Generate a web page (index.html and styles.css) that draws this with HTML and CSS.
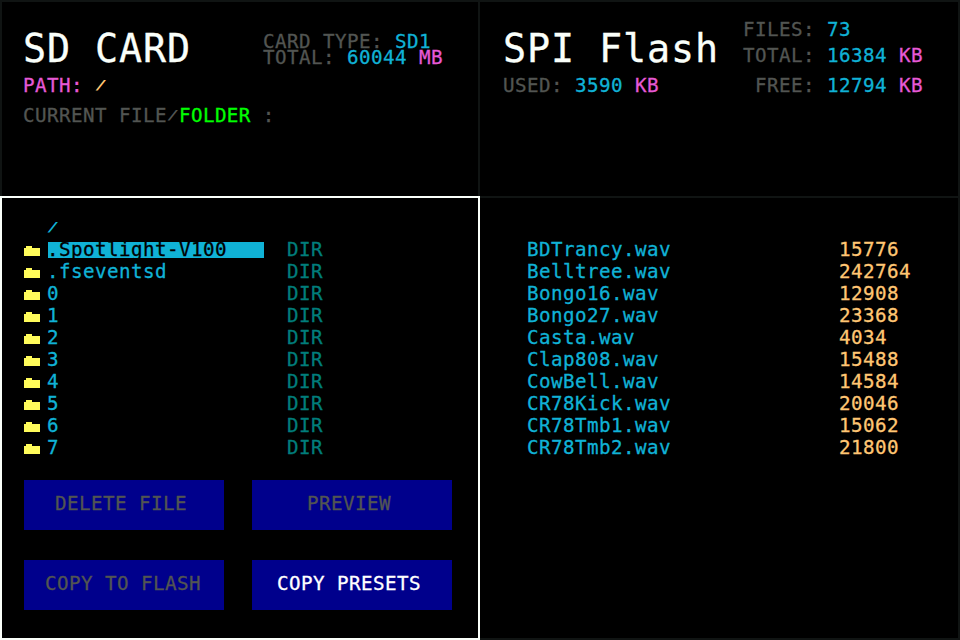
FILE: index.html
```
<!DOCTYPE html>
<html lang="en">
<head>
<meta charset="utf-8">
<title>SD Card / SPI Flash</title>
<link rel="stylesheet" href="styles.css">
</head>
<body>
<svg class="defs" width="0" height="0"><symbol id="folder" viewBox="0 0 16 10"><path d="M0 2h2V0h6v2h8v8H0z"/></symbol></svg>
<main class="screen">
  <section class="panel">
    <div class="top">
      <h1>SD CARD</h1>
      <div class="card-meta">
        <p>CARD TYPE: <b class="cyan">SD1</b></p>
        <p>TOTAL: <b class="cyan">60044</b> <b class="pink">MB</b></p>
      </div>
    </div>
    <p class="path"><b class="pink">PATH:</b> <b class="slash gold">/</b></p>
    <p class="current">CURRENT FILE<b class="slash">/</b><b class="green">FOLDER</b> :</p>
  </section>
  <section class="panel">
    <div class="top">
      <h1>SPI Flash</h1>
      <div class="flash-meta">
        <p>FILES: <b class="cyan">73</b></p>
        <p>TOTAL: <b class="cyan">16384</b> <b class="pink">KB</b></p>
      </div>
    </div>
    <div class="usage">
      <p>USED: <b class="cyan">3590</b> <b class="pink">KB</b></p>
      <p>FREE: <b class="cyan">12794</b> <b class="pink">KB</b></p>
    </div>
  </section>
  <section class="panel active">
    <p class="cwd"><b class="slash cyan">/</b></p>
    <ul class="list">
      <li class="selected"><svg><use href="#folder"/></svg><span class="name">.Spotlight-V100</span><span class="dir">DIR</span></li>
      <li><svg><use href="#folder"/></svg><span class="name">.fseventsd</span><span class="dir">DIR</span></li>
      <li><svg><use href="#folder"/></svg><span class="name">0</span><span class="dir">DIR</span></li>
      <li><svg><use href="#folder"/></svg><span class="name">1</span><span class="dir">DIR</span></li>
      <li><svg><use href="#folder"/></svg><span class="name">2</span><span class="dir">DIR</span></li>
      <li><svg><use href="#folder"/></svg><span class="name">3</span><span class="dir">DIR</span></li>
      <li><svg><use href="#folder"/></svg><span class="name">4</span><span class="dir">DIR</span></li>
      <li><svg><use href="#folder"/></svg><span class="name">5</span><span class="dir">DIR</span></li>
      <li><svg><use href="#folder"/></svg><span class="name">6</span><span class="dir">DIR</span></li>
      <li><svg><use href="#folder"/></svg><span class="name">7</span><span class="dir">DIR</span></li>
    </ul>
    <div class="actions">
      <button class="delete">DELETE FILE</button>
      <button class="preview">PREVIEW</button>
      <button class="copy">COPY TO FLASH</button>
      <button class="presets">COPY PRESETS</button>
    </div>
  </section>
  <section class="panel files">
    <ul class="list">
      <li><span class="name">BDTrancy.wav</span><span class="size">15776</span></li>
      <li><span class="name">Belltree.wav</span><span class="size">242764</span></li>
      <li><span class="name">Bongo16.wav</span><span class="size">12908</span></li>
      <li><span class="name">Bongo27.wav</span><span class="size">23368</span></li>
      <li><span class="name">Casta.wav</span><span class="size">4034</span></li>
      <li><span class="name">Clap808.wav</span><span class="size">15488</span></li>
      <li><span class="name">CowBell.wav</span><span class="size">14584</span></li>
      <li><span class="name">CR78Kick.wav</span><span class="size">20046</span></li>
      <li><span class="name">CR78Tmb1.wav</span><span class="size">15062</span></li>
      <li><span class="name">CR78Tmb2.wav</span><span class="size">21800</span></li>
    </ul>
  </section>
</main>
</body>
</html>
```
FILE: styles.css
```
* { box-sizing: border-box; margin: 0; padding: 0; }
body {
  background: #000;
  color: #525552;
  font: 19.2px/22px "DejaVu Sans Mono", monospace;
  letter-spacing: 0.44px;
  -webkit-text-stroke: 0.3px currentColor;
  white-space: nowrap;
  overflow: hidden;
}
b { font-weight: 400; }
ul { list-style: none; }
.defs { display: block; }
.screen {
  display: grid;
  grid-template: 196px 444px / 480px 480px;
  width: 960px;
  height: 640px;
}
.panel {
  border: 2px solid #101413;
  border-left-width: 0;
  border-bottom-width: 0;
  padding-left: 23px;
}
.panel:nth-child(odd) { border-left-width: 2px; padding-left: 21px; }
.active { border: 2px solid #fafffa; }
.files { border-bottom-width: 2px; }
.top { display: flex; height: 73px; }
h1 {
  width: 240px;
  padding-top: 25px;
  color: #fafffa;
  font-size: 38.4px;
  font-weight: 400;
  line-height: 44px;
  letter-spacing: 0.88px;
}
.card-meta { padding-top: 32px; line-height: 16px; }
.flash-meta { padding-top: 17px; }
.flash-meta p + p { margin-top: 4px; }
.usage { display: grid; grid-template-columns: 252px auto; }
.current { margin-top: 8px; }
.cyan { color: #10b2d6; }
.pink { color: #e659d6; }
.gold { color: #ffc673; }
.green { color: #00ff00; }
.slash {
  display: inline-block;
  width: 12px;
  font-size: 12px;
  letter-spacing: 0;
  text-align: center;
  line-height: 14px;
  vertical-align: 3px;
  transform: scaleX(1.8);
  -webkit-text-stroke-width: 0;
}
.cwd { height: 22px; margin-top: 18px; padding-top: 1px; }
.active .cwd { padding-left: 24px; }
.list li { display: flex; height: 22px; line-height: 24px; }
.list svg {
  width: 16px;
  height: 10px;
  margin: 8px 8px 0 1px;
  fill: #fffb5a;
}
.name { width: 216px; color: #10b2d6; text-indent: -1px; }
.dir { margin-left: 23px; color: #007d7b; }
.selected .name {
  height: 16px;
  margin-top: 4px;
  background: #10b2d6;
  color: #000;
  line-height: 16px;
}
.files .list { padding: 40px 0 0 25px; }
.files .name { width: 311px; }
.size { color: #ffc673; }
.actions {
  display: grid;
  grid-template-columns: 200px 200px;
  grid-auto-rows: 50px;
  gap: 30px 28px;
  margin: 22px 0 0 1px;
}
button {
  border: 0;
  background: #00008c;
  color: #525552;
  font: inherit;
  letter-spacing: inherit;
  text-align: left;
  padding-bottom: 2px;
}
.delete { padding-left: 31px; }
.preview { padding-left: 55px; }
.copy { padding-left: 21px; }
.presets { padding-left: 25px; color: #fff; }
```
